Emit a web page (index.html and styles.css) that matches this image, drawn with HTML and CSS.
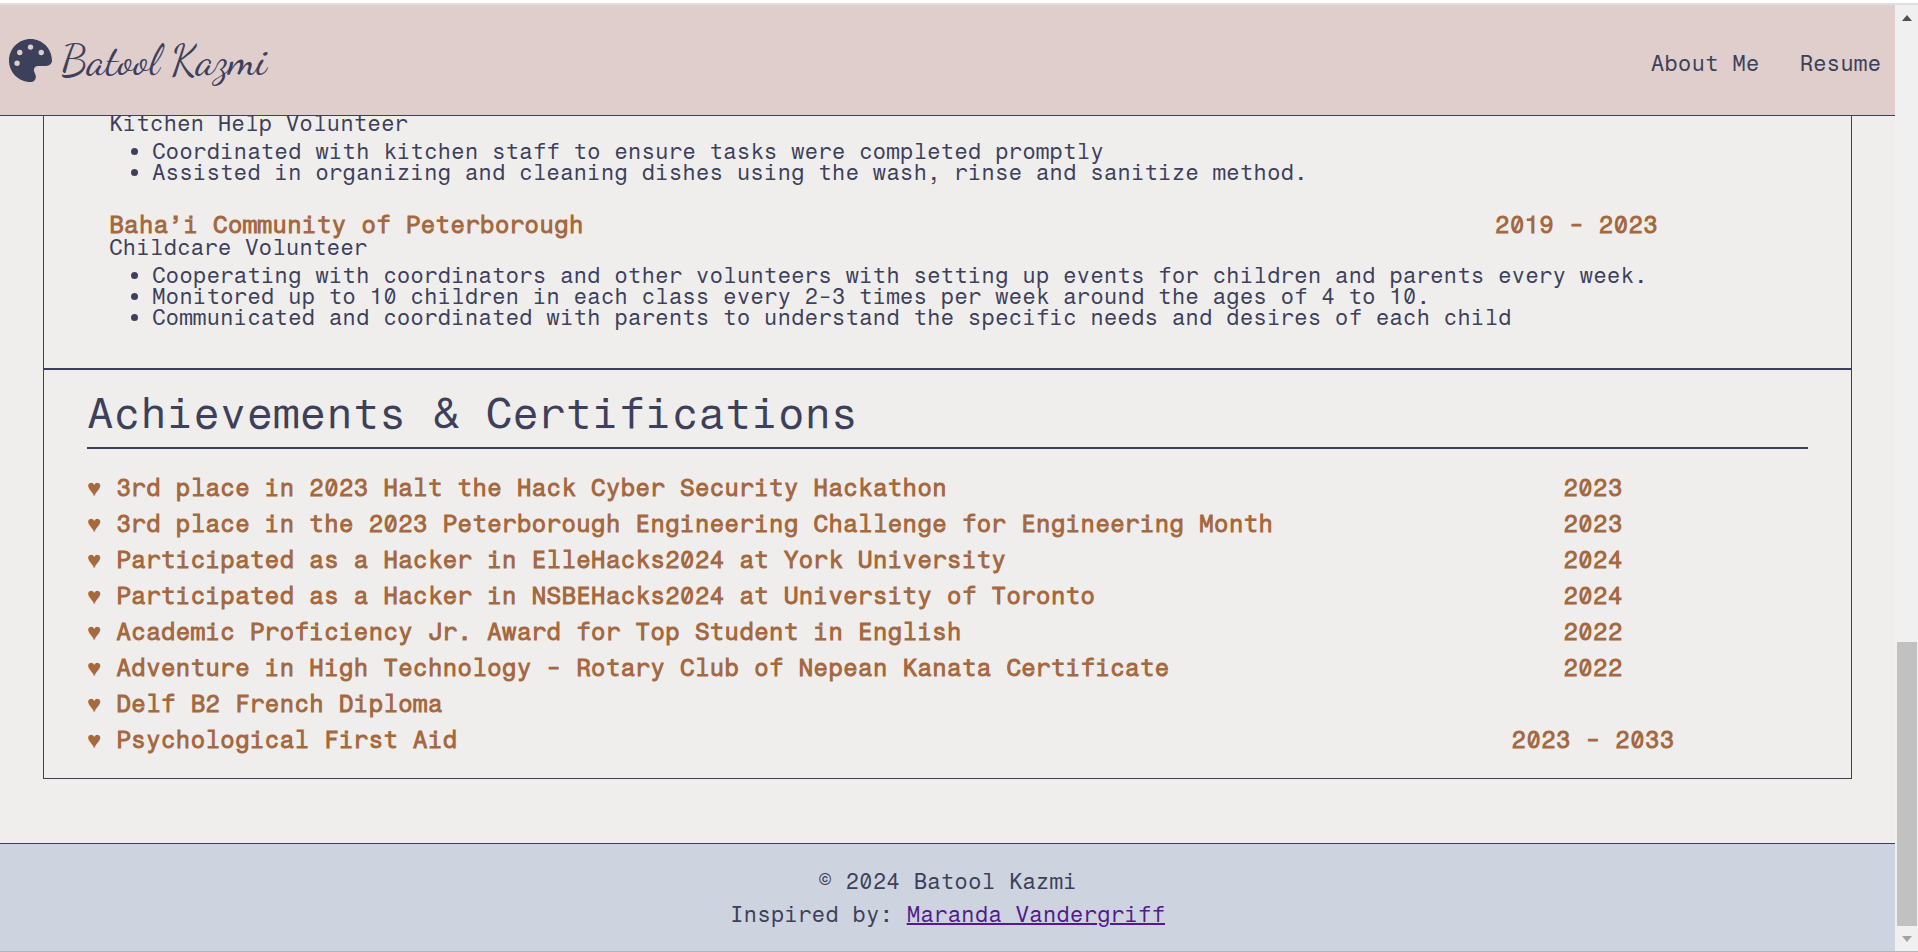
FILE: index.html
```html
<!DOCTYPE html>
<html lang="en">
<head>
<meta charset="utf-8">
<title>Batool Kazmi - Resume</title>
<link rel="stylesheet" href="styles.css">
</head>
<body>
<div class="window">
  <div class="page">
    <header class="site-header">
      <a class="logo" href="#">
        <svg class="logo-icon" viewBox="0 0 512 512" aria-hidden="true"><path fill="currentColor" d="M512 256c0 .9 0 1.8 0 2.7c-.4 36.5-33.6 61.3-70.1 61.3H344c-26.5 0-48 21.5-48 48c0 3.4 .4 6.7 1 9.9c2.1 10.2 6.5 20 10.8 29.9c6.1 13.8 12.1 27.5 12.1 42c0 31.8-21.6 60.7-53.4 62c-3.5 .1-7 .2-10.6 .2C114.6 512 0 397.4 0 256S114.6 0 256 0S512 114.6 512 256zM128 288a32 32 0 1 0 -64 0 32 32 0 1 0 64 0zm0-96a32 32 0 1 0 0-64 32 32 0 1 0 0 64zM288 96a32 32 0 1 0 -64 0 32 32 0 1 0 64 0zm96 96a32 32 0 1 0 0-64 32 32 0 1 0 0 64z"/></svg>
        <span class="logo-name">Batool Kazmi</span>
      </a>
      <nav class="site-nav">
        <a href="#about">About Me</a>
        <a href="#resume">Resume</a>
      </nav>
    </header>

    <main class="content">
      <div class="resume">
        <section class="volunteering">
          <article class="job">
            <p class="role">Kitchen Help Volunteer</p>
            <ul class="duties">
              <li>Coordinated with kitchen staff to ensure tasks were completed promptly</li>
              <li>Assisted in organizing and cleaning dishes using the wash, rinse and sanitize method.</li>
            </ul>
          </article>
          <article class="job">
            <h3 class="job-title"><span>Baha’i Community of Peterborough</span><span class="date">2019 - 2023</span></h3>
            <p class="role">Childcare Volunteer</p>
            <ul class="duties">
              <li>Cooperating with coordinators and other volunteers with setting up events for children and parents every week.</li>
              <li>Monitored up to 10 children in each class every 2-3 times per week around the ages of 4 to 10.</li>
              <li>Communicated and coordinated with parents to understand the specific needs and desires of each child</li>
            </ul>
          </article>
        </section>

        <section class="achievements">
          <h2 class="section-title">Achievements &amp; Certifications</h2>
          <ul class="awards">
            <li><span>♥ 3rd place in 2023 Halt the Hack Cyber Security Hackathon</span><span class="date">2023</span></li>
            <li><span>♥ 3rd place in the 2023 Peterborough Engineering Challenge for Engineering Month</span><span class="date">2023</span></li>
            <li><span>♥ Participated as a Hacker in ElleHacks2024 at York University</span><span class="date">2024</span></li>
            <li><span>♥ Participated as a Hacker in NSBEHacks2024 at University of Toronto</span><span class="date">2024</span></li>
            <li><span>♥ Academic Proficiency Jr. Award for Top Student in English</span><span class="date">2022</span></li>
            <li><span>♥ Adventure in High Technology - Rotary Club of Nepean Kanata Certificate</span><span class="date">2022</span></li>
            <li><span>♥ Delf B2 French Diploma</span></li>
            <li><span>♥ Psychological First Aid</span><span class="date">2023 - 2033</span></li>
          </ul>
        </section>
      </div>
    </main>

    <footer class="site-footer">
      <p>© 2024 Batool Kazmi</p>
      <p>Inspired by: <a href="#maranda">Maranda Vandergriff</a></p>
    </footer>
  </div>

  <div class="scrollbar" aria-hidden="true">
    <svg class="arrow arrow-up" viewBox="0 0 10 6"><path d="M5 0L10 6H0z"/></svg>
    <div class="thumb"></div>
    <svg class="arrow arrow-down" viewBox="0 0 10 6"><path d="M5 6L10 0H0z"/></svg>
  </div>
</div>
</body>
</html>
```

FILE: styles.css
```css
* {
  box-sizing: border-box;
  margin: 0;
  padding: 0;
}

:root {
  --ink: #3d405b;
  --accent: #a5683f;
  --paper: #efeeec;
}

body {
  height: 100vh;
  display: flex;
  flex-direction: column;
  border-top: 3px solid #ffffff;
  border-bottom: 1px solid #b3b6bf;
  background: var(--paper);
  color: var(--ink);
  font-family: "Fragment Mono", "Liberation Mono", monospace;
  font-size: 22px;
  line-height: 21px;
  overflow: hidden;
}

.window {
  flex: 1;
  min-height: 0;
  display: flex;
  border-top: 2px solid #dfdfdf;
}

.page {
  flex: 1;
  min-width: 0;
  display: flex;
  flex-direction: column;
}

/* Header */
.site-header {
  flex: none;
  height: 111px;
  display: flex;
  align-items: center;
  justify-content: space-between;
  padding: 0 14px 0 9px;
  background: #e0cecd;
  border-bottom: 1px solid var(--ink);
}

.logo {
  display: flex;
  align-items: center;
  gap: 9px;
  color: inherit;
  text-decoration: none;
}

.logo-icon {
  width: 43px;
  height: 43px;
}

.logo-name {
  font-family: "Dancing Script", "Liberation Serif", serif;
  font-size: 43px;
  line-height: 44px;
}

.site-nav {
  display: flex;
  gap: 40px;
  padding-top: 6px;
}

.site-nav a {
  color: inherit;
  text-decoration: none;
}

/* Resume, kept at the end of its scroll range */
.content {
  flex: 1;
  min-height: 0;
  display: flex;
  flex-direction: column;
  justify-content: flex-end;
  padding: 0 43px 64px;
  overflow: hidden;
}

.resume {
  flex: none;
  border: 1px solid var(--ink);
  border-top: 0;
}

.volunteering {
  display: grid;
  gap: 30px;
  padding: 0 65px 40px;
}

.job-title,
.awards li {
  display: grid;
  grid-template-columns: 3fr 1fr;
  color: var(--accent);
  font-size: 24px;
  font-weight: bold;
}

.job-title {
  line-height: 24px;
}

.date {
  text-align: center;
}

.duties {
  margin-top: 7px;
  padding-left: 43px;
}

.achievements {
  padding: 18px 43px 20px;
  border-top: 2px solid var(--ink);
}

.section-title {
  padding-bottom: 9px;
  border-bottom: 2px solid var(--ink);
  font-size: 43px;
  font-weight: normal;
  line-height: 50px;
}

.awards {
  margin-top: 21px;
  list-style: none;
  line-height: 36px;
}

/* Footer */
.site-footer {
  flex: none;
  padding: 21px 0 20px;
  border-top: 1px solid var(--ink);
  background: #cdd4e0;
  text-align: center;
  line-height: 33px;
}

.site-footer a {
  color: #551a8b;
  text-decoration-thickness: 2px;
}

/* Scrollbar */
.scrollbar {
  flex: none;
  width: 23px;
  display: flex;
  flex-direction: column;
  align-items: center;
  padding: 10px 0 9px;
  background: #f0f0f0;
}

.arrow {
  width: 10px;
  height: 6px;
}

.arrow-up {
  fill: #505050;
}

.arrow-down {
  fill: #a3a3a3;
}

.thumb {
  width: 20px;
  height: 284px;
  margin: auto 0 10px;
  background: #c1c1c1;
}
```
